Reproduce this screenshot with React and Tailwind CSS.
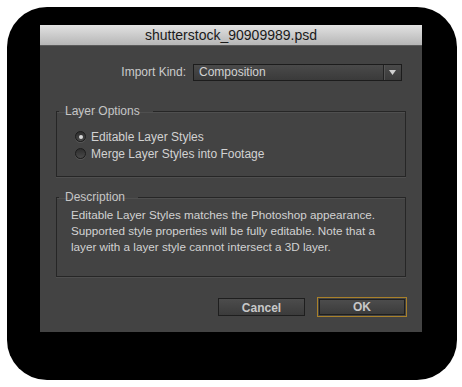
import React from 'react';

const font = { fontFamily: '"Liberation Sans", Arial, sans-serif' };

function Radio({ checked, label }) {
  return (
    <label className="flex items-center gap-[5px] h-[17px]">
      <span className="w-[11px] h-[11px] rounded-full border border-[#1c1c1c] bg-gradient-to-b from-[#2e2e2e] to-[#4a4a4a] flex items-center justify-center shadow-[0_1px_0_#555]">
        {checked && <span className="w-[4px] h-[4px] rounded-full bg-[#d8d8d8]" />}
      </span>
      <span className="text-[12px] text-[#d2d2d2]">{label}</span>
    </label>
  );
}

function Group({ title, className = '', children }) {
  return (
    <fieldset
      className={`mx-[16px] border border-[#262626] shadow-[0_1px_0_#4f4f4f,inset_0_1px_0_#4f4f4f] ${className}`}
    >
      <legend className="ml-[2px] pl-[6px] pr-[13px] text-[12px] leading-[14px] text-[#c6c6c6]">
        {title}
      </legend>
      {children}
    </fieldset>
  );
}

export default function App() {
  return (
    <div className="w-[462px] h-[387px] bg-white pt-[7px] pl-[7px]" style={font}>
      <div className="w-[450px] h-[373px] bg-black rounded-[40px] pl-[33px] pt-[18px]">
        <div className="w-[382px] h-[307px] flex flex-col">
          {/* title bar */}
          <div className="h-[21px] bg-gradient-to-b from-[#e2e2e2] to-[#b6b6b6] border-b border-[#5a5a5a] flex items-center justify-center text-[14px] text-[#1a1a1a]">
            shutterstock_90909989.psd
          </div>

          {/* body */}
          <div className="flex-1 bg-[#434343] flex flex-col">
            <div className="flex items-center justify-end gap-[7px] mt-[17px] mr-[20px]">
              <span className="text-[12px] text-[#cbcbcb]">Import Kind:</span>
              <div className="w-[209px] h-[17px] border border-[#1c1c1c] bg-gradient-to-b from-[#4a4a4a] to-[#3a3a3a] flex items-center">
                <span className="flex-1 pl-[5px] text-[12px] text-[#d2d2d2]">Composition</span>
                <span className="h-full w-px bg-[#222] shadow-[1px_0_0_#555]" />
                <span className="w-[17px] flex items-center justify-center">
                  <svg width="7" height="5" viewBox="0 0 7 5">
                    <path d="M0 0h7L3.5 5z" fill="#cfcfcf" />
                  </svg>
                </span>
              </div>
            </div>

            <Group title="Layer Options" className="mt-[23px] h-[73px]">
              <div className="pl-[18px] pt-[10px] flex flex-col">
                <Radio checked label="Editable Layer Styles" />
                <Radio label="Merge Layer Styles into Footage" />
              </div>
            </Group>

            <Group title="Description" className="mt-[13px] h-[87px]">
              <p className="pl-[14px] pt-[3px] pr-[10px] text-[11.7px] leading-[16px] text-[#d2d2d2]">
                Editable Layer Styles matches the Photoshop appearance.
                Supported style properties will be fully editable. Note that a
                layer with a layer style cannot intersect a 3D layer.
              </p>
            </Group>

            <div className="mt-auto mb-[15px] mr-[15px] flex justify-end items-center gap-[12px]">
              <button className="w-[87px] h-[18px] border border-[#1e1e1e] bg-gradient-to-b from-[#4c4c4c] to-[#3b3b3b] text-[12px] font-bold text-[#c8c8c8]">
                Cancel
              </button>
              <button className="w-[90px] h-[20px] border border-[#a9812a] p-px">
                <span className="w-full h-full flex items-center justify-center border border-[#1e1e1e] bg-gradient-to-b from-[#4c4c4c] to-[#3b3b3b] text-[12px] font-bold text-[#c8c8c8]">
                  OK
                </span>
              </button>
            </div>
          </div>
        </div>
      </div>
    </div>
  );
}
